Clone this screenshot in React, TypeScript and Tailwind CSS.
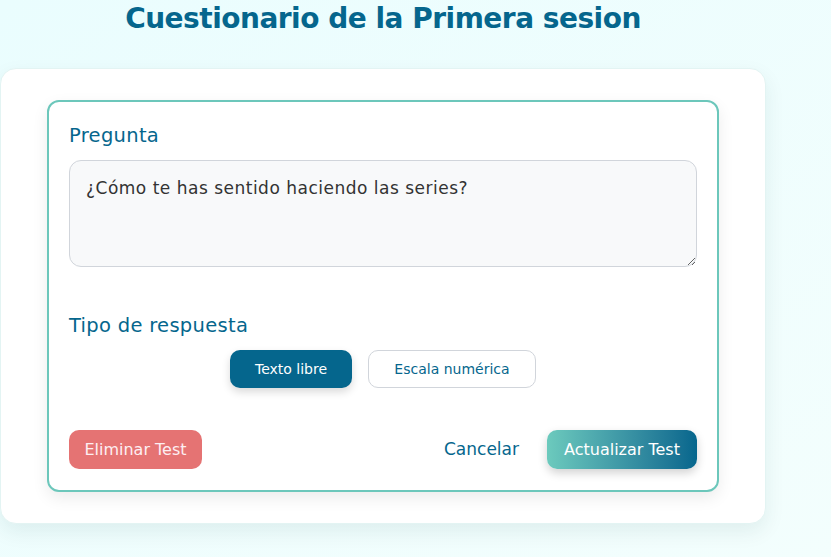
import React from "react";

export default function App() {
  return (
    <div
      className="min-h-screen w-full bg-gradient-to-br from-[#eafdfe] to-[#f3fefd] overflow-hidden"
      style={{ fontFamily: '"DejaVu Sans", "Noto Sans", sans-serif' }}
    >
      <div className="w-[766px]">
        <h1 className="text-center text-[28px] leading-[36px] font-bold text-[#05668d] mt-[1px] tracking-[-0.5px]">
          Cuestionario de la Primera sesion
        </h1>
        <div className="mt-[31px] rounded-2xl bg-white border border-[#e3f4f3] shadow-[0_8px_20px_rgba(0,60,70,0.08)] px-[46px] pt-[31px] pb-[31px]">
          <div className="rounded-xl border-2 border-[#6cc7bb] bg-white shadow-[0_6px_16px_rgba(0,0,0,0.08)] px-[20px] pt-[20px] pb-[21px]">
            <label className="block text-[19.5px] leading-[28px] font-medium tracking-[0.3px] text-[#05668d]">
              Pregunta
            </label>
            <textarea
              className="mt-[10px] block w-full h-[107px] rounded-xl border border-[#d1d5db] bg-[#f8f9fa] px-[16px] py-[15px] text-[17px] leading-[24px] tracking-[0.5px] text-[#333] outline-none"
              defaultValue="¿Cómo te has sentido haciendo las series?"
            />
            <label className="mt-[45px] block text-[19.5px] leading-[28px] font-medium tracking-[0.3px] text-[#05668d]">
              Tipo de respuesta
            </label>
            <div className="mt-[10px] flex justify-center gap-[16px]">
              <button className="h-[38px] w-[122px] rounded-[10px] bg-[#05668d] text-[14px] text-white shadow-[0_4px_8px_rgba(0,0,0,0.15)]">
                Texto libre
              </button>
              <button className="h-[38px] w-[168px] rounded-[10px] border border-[#d1d5db] bg-white text-[14px] text-[#05668d]">
                Escala numérica
              </button>
            </div>
            <div className="mt-[42px] flex items-center justify-between">
              <button className="h-[39px] w-[133px] rounded-[10px] bg-[#e57373] text-[16px] text-[#fdeef2]">
                Eliminar Test
              </button>
              <div className="flex items-center gap-[12px]">
                <button className="h-[39px] px-[16px] text-[17px] font-medium text-[#05668d]">
                  Cancelar
                </button>
                <button className="h-[39px] w-[150px] rounded-[10px] bg-gradient-to-r from-[#6ccabd] to-[#05668d] text-[16px] text-white shadow-[0_4px_10px_rgba(0,0,0,0.18)]">
                  Actualizar Test
                </button>
              </div>
            </div>
          </div>
        </div>
      </div>
    </div>
  );
}
